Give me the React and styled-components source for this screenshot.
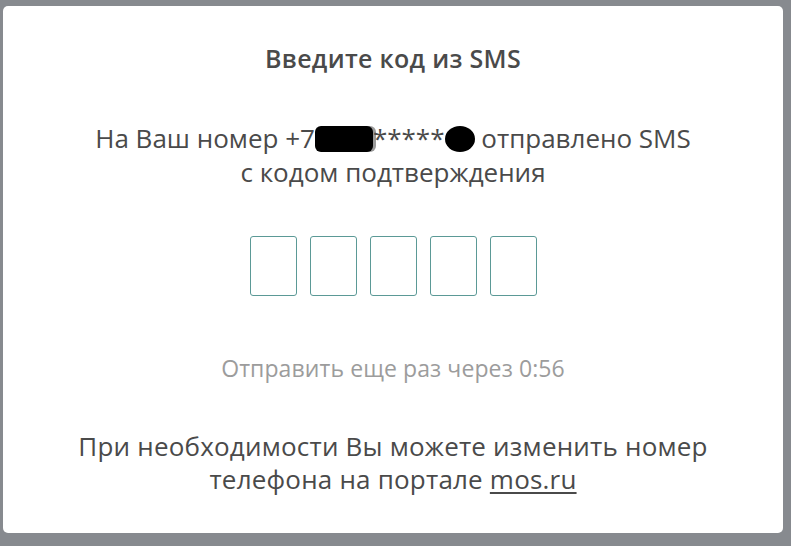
import React from "react";
import styled, { createGlobalStyle } from "styled-components";

const GlobalStyle = createGlobalStyle`
  html, body {
    margin: 0;
    padding: 0;
    background: #878a8f;
  }
`;

const Page = styled.div`
  width: 791px;
  height: 546px;
  box-sizing: border-box;
  padding: 6px 8px 13px 3px;
  background: #878a8f;
  display: flex;
`;

const Modal = styled.div`
  flex: 1;
  background: #ffffff;
  border-radius: 5px;
  display: flex;
  flex-direction: column;
  align-items: center;
  padding-top: 37px;
  box-sizing: border-box;
  font-family: "Open Sans", "Noto Sans", sans-serif;
  color: #4a4a4a;
`;

const Title = styled.div`
  font-weight: 600;
  font-size: 25px;
  line-height: 30px;
  letter-spacing: 0.3px;
  color: #4a4a4a;
`;

const Message = styled.div`
  margin-top: 48px;
  font-size: 26px;
  line-height: 34px;
  text-align: center;
`;

const Redacted = styled.span`
  display: inline-block;
  vertical-align: -4px;
  width: ${({ $w }) => $w}px;
  height: ${({ $h }) => $h}px;
  background: #000;
  border-radius: ${({ $round }) => ($round ? "50%" : "6px")};
  box-shadow: ${({ $round }) => ($round ? "none" : "3px 0 0 #9a9a9a")};
`;

const Codes = styled.div`
  margin-top: 47px;
  display: flex;
  gap: 13px;
`;

const CodeBox = styled.input`
  width: 47px;
  height: 60px;
  box-sizing: border-box;
  border: 1px solid #5b9996;
  border-radius: 3px;
  padding: 0;
  background: #fff;
  outline: none;
  text-align: center;
  font-size: 24px;
`;

const Timer = styled.div`
  margin-top: 57px;
  font-size: 23px;
  line-height: 30px;
  letter-spacing: 0.1px;
  color: #9c9c9c;
`;

const Footer = styled.div`
  margin-top: 47px;
  font-size: 26px;
  line-height: 33px;
  letter-spacing: 0.2px;
  text-align: center;
`;

const Link = styled.a`
  color: inherit;
  text-decoration: underline;
  text-underline-offset: 3px;
`;

export default function App() {
  return (
    <>
      <GlobalStyle />
      <Page>
        <Modal>
          <Title>Введите код из SMS</Title>
          <Message>
            На Ваш номер +7<Redacted $w={58} $h={26} />*****
            <Redacted $w={30} $h={26} $round /> отправлено SMS
            <br />с кодом подтверждения
          </Message>
          <Codes>
            {[0, 1, 2, 3, 4].map((i) => (
              <CodeBox key={i} maxLength={1} />
            ))}
          </Codes>
          <Timer>Отправить еще раз через 0:56</Timer>
          <Footer>
            При необходимости Вы можете изменить номер
            <br />
            телефона на портале <Link href="#">mos.ru</Link>
          </Footer>
        </Modal>
      </Page>
    </>
  );
}
